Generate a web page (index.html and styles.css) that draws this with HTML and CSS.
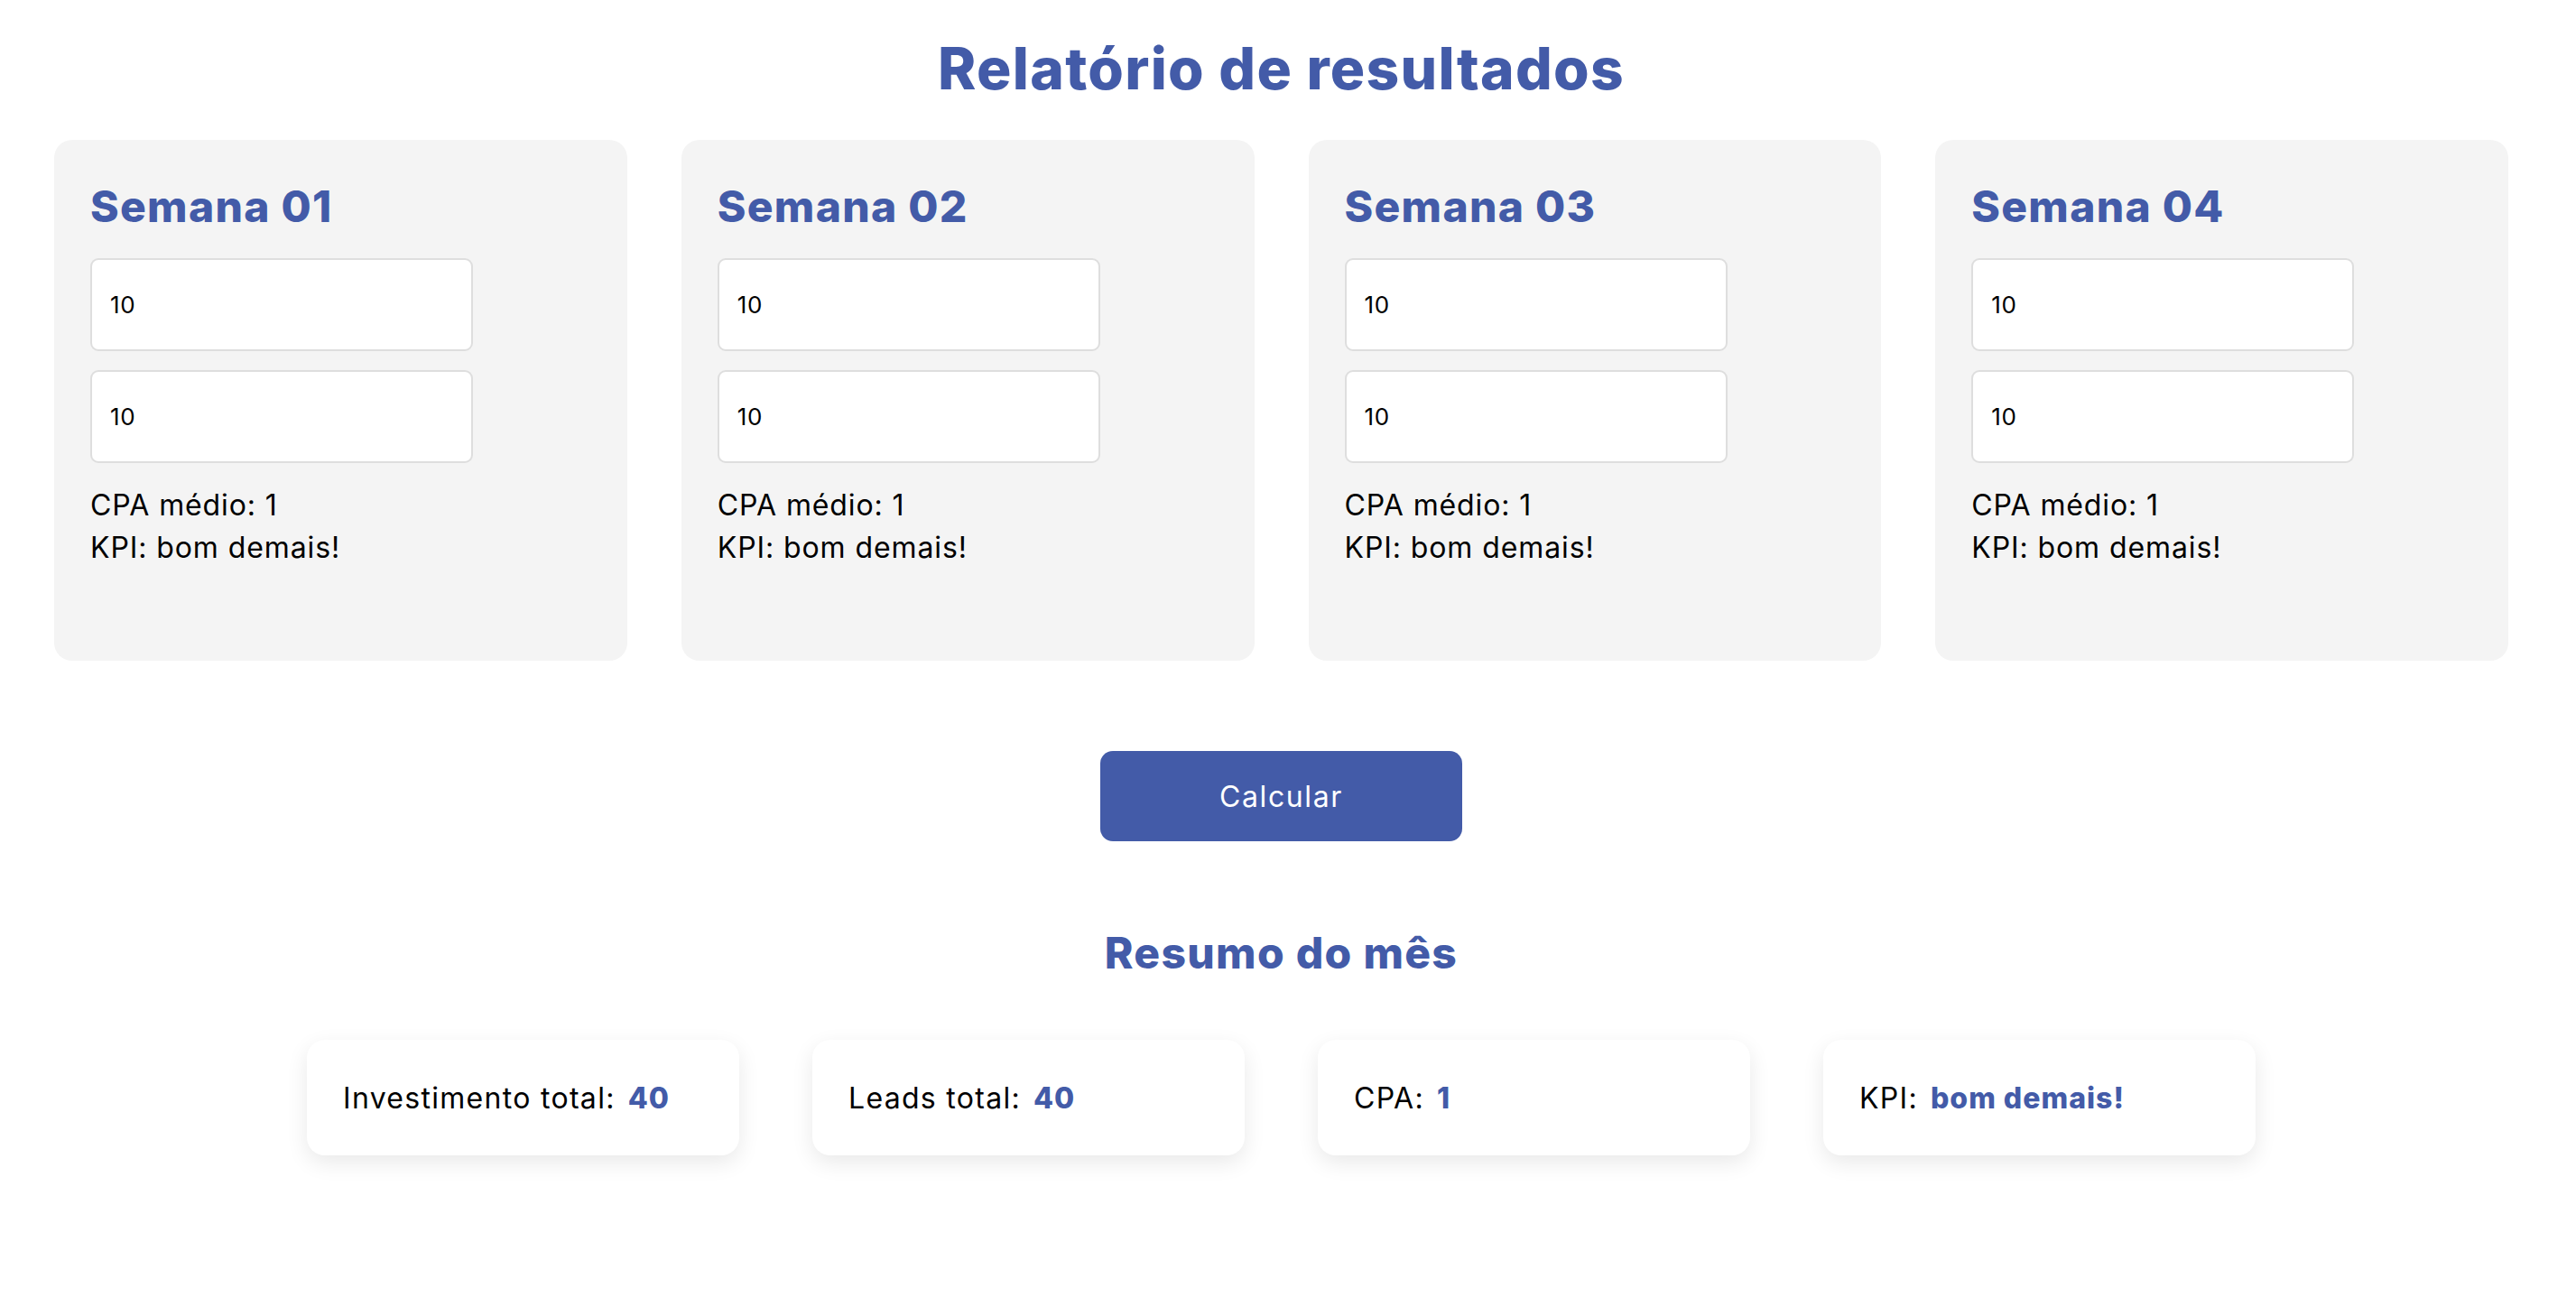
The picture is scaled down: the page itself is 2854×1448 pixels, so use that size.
FILE: index.html
```html
<!DOCTYPE html>
<html lang="pt-BR">
<head>
<meta charset="utf-8">
<title>Relatório de resultados</title>
<link rel="stylesheet" href="styles.css">
</head>
<body>
<div class="page">
  <h1 class="title">Relatório de resultados</h1>
  <section class="weeks">
    <div class="week">
      <h2 class="week-title">Semana 01</h2>
      <input class="field" type="text" value="10">
      <input class="field" type="text" value="10">
      <p class="line">CPA médio: 1</p>
      <p class="line">KPI: bom demais!</p>
    </div>
    <div class="week">
      <h2 class="week-title">Semana 02</h2>
      <input class="field" type="text" value="10">
      <input class="field" type="text" value="10">
      <p class="line">CPA médio: 1</p>
      <p class="line">KPI: bom demais!</p>
    </div>
    <div class="week">
      <h2 class="week-title">Semana 03</h2>
      <input class="field" type="text" value="10">
      <input class="field" type="text" value="10">
      <p class="line">CPA médio: 1</p>
      <p class="line">KPI: bom demais!</p>
    </div>
    <div class="week">
      <h2 class="week-title">Semana 04</h2>
      <input class="field" type="text" value="10">
      <input class="field" type="text" value="10">
      <p class="line">CPA médio: 1</p>
      <p class="line">KPI: bom demais!</p>
    </div>
  </section>
  <div class="actions">
    <button class="btn" type="button">Calcular</button>
  </div>
  <h2 class="subtitle">Resumo do mês</h2>
  <section class="summary">
    <div class="stat">Investimento total:<span class="val">40</span></div>
    <div class="stat">Leads total:<span class="val">40</span></div>
    <div class="stat">CPA:<span class="val">1</span></div>
    <div class="stat">KPI:<span class="val">bom demais!</span></div>
  </section>
</div>
</body>
</html>
```
FILE: styles.css
```css
* { box-sizing: border-box; }
html, body {
  margin: 0;
  padding: 0;
  background: #ffffff;
}
body {
  font-family: "Inter", "Open Sans", sans-serif;
  color: #000;
}
.page {
  width: 2839px;
  padding-top: 28px;
}
.title {
  margin: 0;
  text-align: center;
  font-size: 64px;
  line-height: 96px;
  font-weight: 800;
  letter-spacing: 1.3px;
  color: #435ba8;
}
.weeks {
  margin-top: 31px;
  padding: 0 60px;
  display: grid;
  grid-template-columns: repeat(4, 1fr);
  gap: 60px;
}
.week {
  background: #f4f4f4;
  border-radius: 20px;
  height: 577px;
  padding: 38px 40px 40px;
  display: flex;
  flex-direction: column;
  align-items: flex-start;
}
.week-title {
  margin: 0 0 21px;
  font-size: 48px;
  line-height: 72px;
  font-weight: 800;
  letter-spacing: 1.3px;
  color: #435ba8;
}
.field {
  width: 424px;
  height: 103px;
  border: 2px solid #dedede;
  border-radius: 9px;
  background: #fff;
  padding: 0 20px;
  font-family: "Inter", "Open Sans", sans-serif;
  font-size: 26px;
  letter-spacing: 0.6px;
  color: #000;
  margin: 0 0 21px;
  outline: none;
}
.field + .field { margin-bottom: 23px; }
.line {
  margin: 0;
  font-size: 32px;
  line-height: 47px;
  letter-spacing: 0.9px;
}
.actions {
  margin-top: 100px;
  display: flex;
  justify-content: center;
}
.btn {
  width: 401px;
  height: 100px;
  border: none;
  border-radius: 14px;
  background: #435ba8;
  color: #fff;
  font-family: "Inter", "Open Sans", sans-serif;
  font-size: 32px;
  font-weight: 400;
  letter-spacing: 1.6px;
}
.subtitle {
  margin: 88px 0 0;
  text-align: center;
  font-size: 48px;
  line-height: 72px;
  font-weight: 800;
  letter-spacing: 1.3px;
  color: #435ba8;
}
.summary {
  margin-top: 60px;
  display: flex;
  justify-content: center;
  gap: 81px;
  padding-bottom: 80px;
}
.stat {
  width: 479px;
  height: 128px;
  background: #fff;
  border-radius: 20px;
  box-shadow: 0 8px 24px rgba(0, 0, 0, 0.09);
  padding: 0 40px;
  display: flex;
  align-items: center;
  font-size: 32px;
  letter-spacing: 1.3px;
}
.val {
  margin-left: 14px;
  font-weight: 800;
  letter-spacing: 1px;
  color: #435ba8;
}
```
